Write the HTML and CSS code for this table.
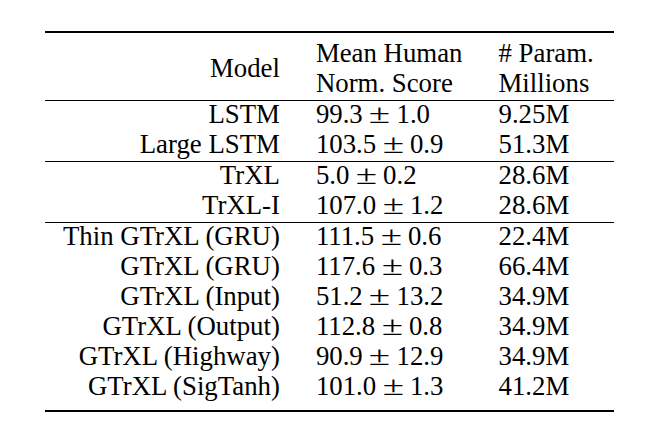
FILE: index.html
```html
<!DOCTYPE html>
<html>
<head>
<meta charset="utf-8">
<link rel="stylesheet" href="styles.css">
</head>
<body>
<div class="page">
<table class="results">
  <thead>
    <tr>
      <th class="model">Model</th>
      <th class="col">Mean Human<br>Norm. Score</th>
      <th class="col last-col"># Param.<br>Millions</th>
    </tr>
  </thead>
  <tbody class="group">
    <tr><td class="model">LSTM</td><td>99.3<span class="pm">±</span>1.0</td><td class="last-col">9.25M</td></tr>
    <tr><td class="model">Large LSTM</td><td>103.5<span class="pm">±</span>0.9</td><td class="last-col">51.3M</td></tr>
  </tbody>
  <tbody class="group">
    <tr><td class="model">TrXL</td><td>5.0<span class="pm">±</span>0.2</td><td class="last-col">28.6M</td></tr>
    <tr><td class="model">TrXL-I</td><td>107.0<span class="pm">±</span>1.2</td><td class="last-col">28.6M</td></tr>
  </tbody>
  <tbody class="group last">
    <tr><td class="model">Thin GTrXL (GRU)</td><td>111.5<span class="pm">±</span>0.6</td><td class="last-col">22.4M</td></tr>
    <tr><td class="model">GTrXL (GRU)</td><td>117.6<span class="pm">±</span>0.3</td><td class="last-col">66.4M</td></tr>
    <tr><td class="model">GTrXL (Input)</td><td>51.2<span class="pm">±</span>13.2</td><td class="last-col">34.9M</td></tr>
    <tr><td class="model">GTrXL (Output)</td><td>112.8<span class="pm">±</span>0.8</td><td class="last-col">34.9M</td></tr>
    <tr><td class="model">GTrXL (Highway)</td><td>90.9<span class="pm">±</span>12.9</td><td class="last-col">34.9M</td></tr>
    <tr><td class="model">GTrXL (SigTanh)</td><td>101.0<span class="pm">±</span>1.3</td><td class="last-col">41.2M</td></tr>
  </tbody>
</table>
</div>
</body>
</html>
```

FILE: styles.css
```css
html, body {
  margin: 0;
  padding: 0;
  background: #ffffff;
}

.page {
  padding: 31px 0 0 45px;
}

.results {
  border-collapse: collapse;
  font-family: "Liberation Serif", "Times New Roman", serif;
  font-size: 26.8px;
  color: #000000;
  border-top: 2px solid #000000;
  border-bottom: 2px solid #000000;
}

.results th {
  font-weight: normal;
  line-height: 30px;
  padding: 5px 18px 2px 18px;
  text-align: left;
  vertical-align: top;
  white-space: nowrap;
}

.results th.model {
  text-align: right;
  vertical-align: middle;
}

.results td {
  line-height: 26px;
  padding: 0 18px 4px 18px;
  text-align: left;
  white-space: nowrap;
}

.results td.model {
  text-align: right;
}

.results .last-col {
  padding-right: 20px;
}

.pm {
  display: inline-block;
  margin: 0 9.5px;
  transform: scaleX(1.45);
  transform-origin: 50% 50%;
}

.group {
  border-top: 1px solid #000000;
}

.last tr:last-child td {
  padding-bottom: 11px;
}
```
